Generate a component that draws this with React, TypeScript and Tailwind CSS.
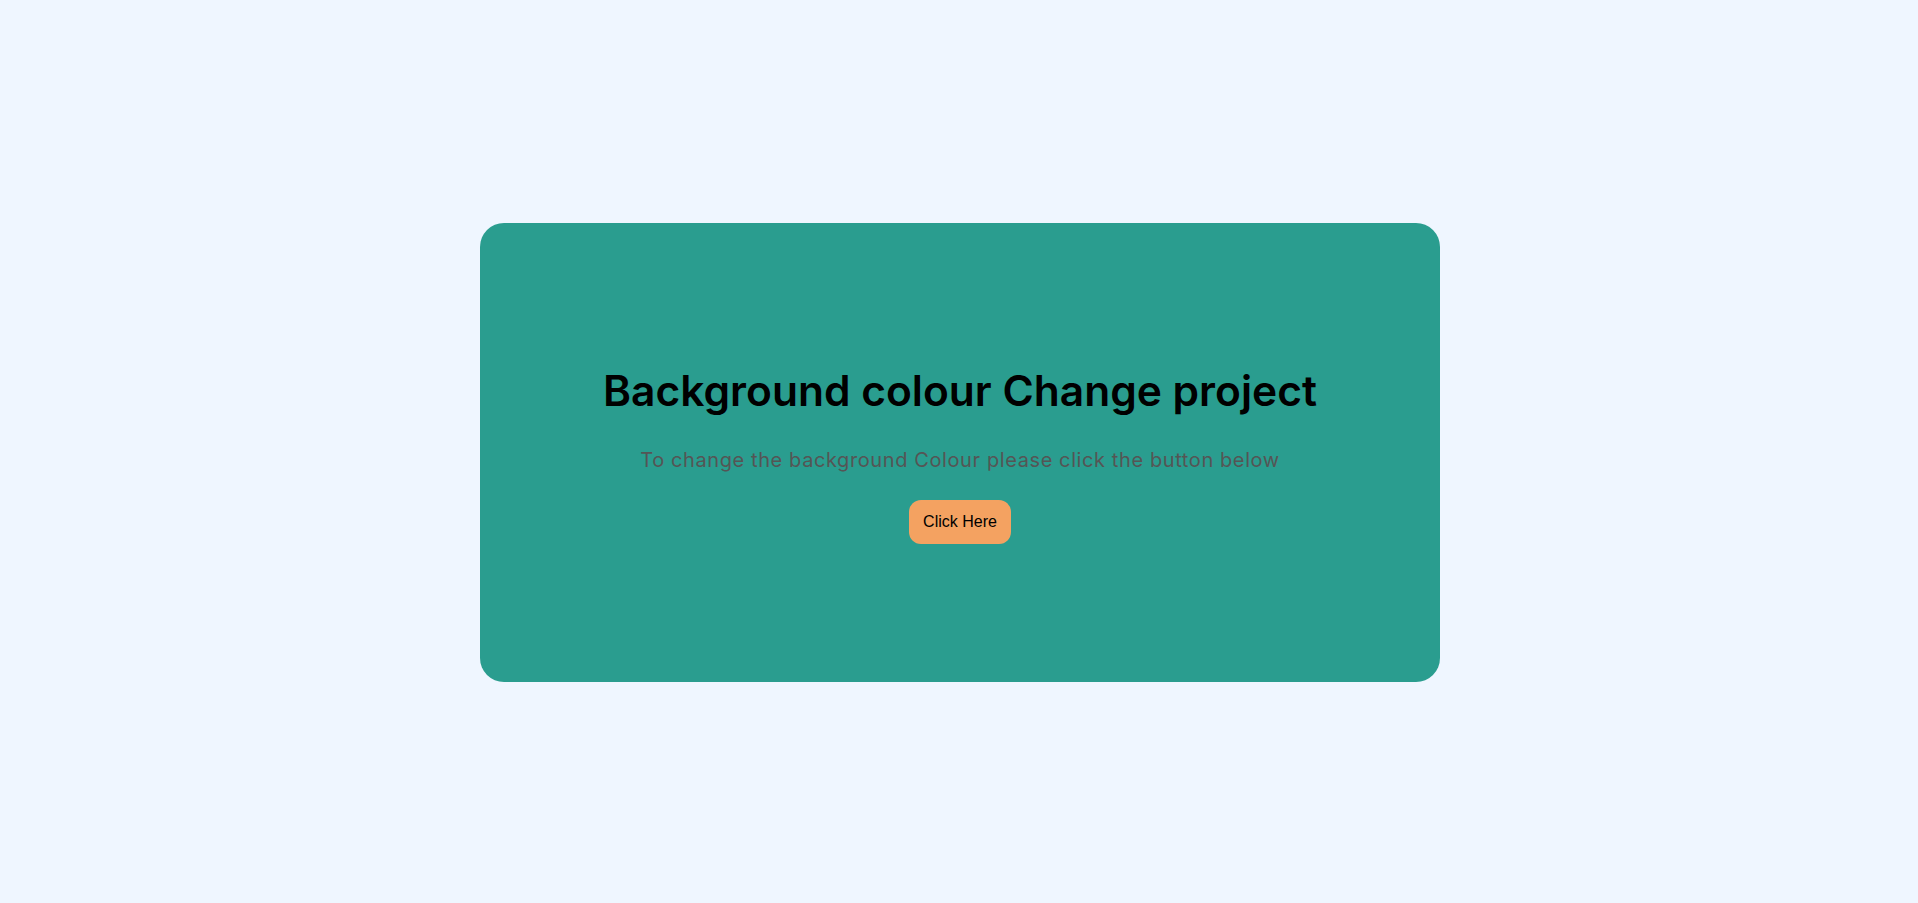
import React, { useState } from "react";

const colours = ["#2a9d8f", "#e76f51", "#264653", "#e9c46a", "#8ab17d"];

const App = () => {
  const [index, setIndex] = useState(0);
  const handleClick = () => {
    setIndex((index + 1) % colours.length);
  };
  return (
    <div className="min-h-screen w-full bg-[#eff6ff] flex items-center justify-center pl-[2px] pt-[2px]">
      <div
        className="w-[960px] h-[459px] rounded-3xl flex flex-col items-center pt-[147px]"
        style={{ backgroundColor: colours[index] }}
      >
        <h1 className="font-['Inter',sans-serif] font-semibold text-[42.5px] leading-none text-black">
          Background colour Change project
        </h1>
        <p className="mt-[32px] font-['Inter',sans-serif] text-[20px] leading-[30px] tracking-[0.6px] text-[#555555]">
          To change the background Colour please click the button below
        </p>
        <button
          onClick={handleClick}
          className="mt-[25px] h-[44px] px-[14px] rounded-xl bg-[#f4a261] font-['Liberation_Sans',Arial,sans-serif] text-[16px] text-black cursor-pointer"
        >
          Click Here
        </button>
      </div>
    </div>
  );
};

export default App;
